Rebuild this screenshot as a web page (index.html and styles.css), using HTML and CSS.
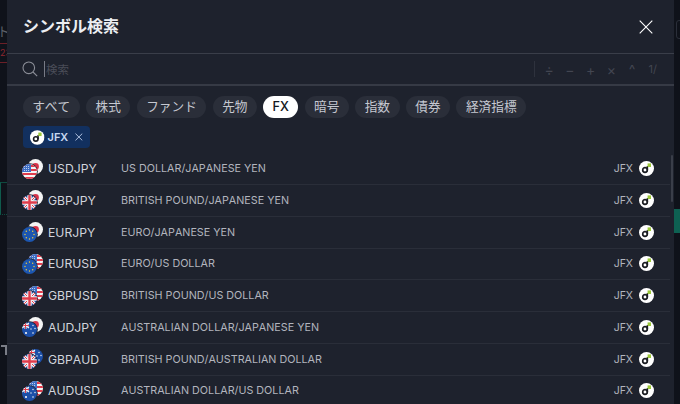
FILE: index.html
```html
<!DOCTYPE html>
<html lang="ja">
<head>
<meta charset="utf-8">
<title>シンボル検索</title>
<link rel="stylesheet" href="styles.css">
</head>
<body>
<svg class="defs" width="0" height="0" aria-hidden="true">
  <defs>
    <symbol id="jpy" viewBox="0 0 15 15"><circle cx="7.5" cy="7.5" r="7.5" fill="#f4f4f4"/><circle cx="7.5" cy="7.5" r="3.4" fill="#d8334a"/></symbol>
    <symbol id="usd" viewBox="0 0 15 15">
      <clipPath id="cu"><circle cx="7.5" cy="7.5" r="7.5"/></clipPath>
      <g clip-path="url(#cu)"><rect width="15" height="15" fill="#f5f5f5"/>
      <rect y="1" width="15" height="2" fill="#e03c4c"/><rect y="5" width="15" height="2" fill="#e03c4c"/><rect y="9" width="15" height="2" fill="#e03c4c"/><rect y="13" width="15" height="2" fill="#e03c4c"/>
      <rect width="9" height="8" fill="#3f6fc4"/>
      <path d="M2 2.5h5M2 4.5h5M2 6.5h5" stroke="#dfe8f7" stroke-width=".8" stroke-dasharray="1 1"/></g>
    </symbol>
    <symbol id="gbp" viewBox="0 0 15 15">
      <clipPath id="cg"><circle cx="7.5" cy="7.5" r="7.5"/></clipPath>
      <g clip-path="url(#cg)"><rect width="15" height="15" fill="#2a4a9a"/>
      <path d="M0 0L15 15M15 0L0 15" stroke="#f5f5f5" stroke-width="3"/>
      <path d="M0 0L15 15M15 0L0 15" stroke="#e03c4c" stroke-width="1"/>
      <path d="M7.5 0V15M0 7.5H15" stroke="#f5f5f5" stroke-width="4.4"/>
      <path d="M7.5 0V15M0 7.5H15" stroke="#e03c4c" stroke-width="2.4"/></g>
    </symbol>
    <symbol id="eur" viewBox="0 0 15 15"><circle cx="7.5" cy="7.5" r="7.5" fill="#1c56b0"/>
      <g fill="#f3cf3c"><circle cx="7.5" cy="3" r=".7"/><circle cx="10.7" cy="4.3" r=".7"/><circle cx="12" cy="7.5" r=".7"/><circle cx="10.7" cy="10.7" r=".7"/><circle cx="7.5" cy="12" r=".7"/><circle cx="4.3" cy="10.7" r=".7"/><circle cx="3" cy="7.5" r=".7"/><circle cx="4.3" cy="4.3" r=".7"/></g>
    </symbol>
    <symbol id="aud" viewBox="0 0 15 15">
      <clipPath id="ca"><circle cx="7.5" cy="7.5" r="7.5"/></clipPath>
      <g clip-path="url(#ca)"><rect width="15" height="15" fill="#1c4fa8"/>
      <path d="M0 1L7 6M7 1L0 6" stroke="#f5f5f5" stroke-width="1.3"/>
      <path d="M3.5 0V7M0 3.5H7" stroke="#f5f5f5" stroke-width="2"/>
      <path d="M3.5 0V7M0 3.5H7" stroke="#e03c4c" stroke-width="1"/>
      <g fill="#f5f5f5"><circle cx="4" cy="11" r="1.1"/><circle cx="11" cy="3.5" r=".7"/><circle cx="13" cy="6.5" r=".7"/><circle cx="9" cy="7" r=".7"/><circle cx="11" cy="11" r=".8"/></g></g>
    </symbol>
    <symbol id="jfx" viewBox="0 0 15 15"><circle cx="7.5" cy="7.5" r="7.5" fill="#fff"/>
      <circle cx="6" cy="9" r="2.3" fill="none" stroke="#1b1d22" stroke-width="1.7"/>
      <path d="M8.4 9V5" stroke="#1b1d22" stroke-width="1.5"/>
      <rect x="8.6" y="2.4" width="3.4" height="3.6" fill="#9cc83a"/>
    </symbol>
  </defs>
</svg>

<div class="backdrop backdrop-left">
  <span class="bg-letter bg-to">ト</span>
  <span class="bg-red">23</span>
  <span class="bg-green"></span>
  <span class="bg-t"></span>
</div>

<main class="modal">
  <header class="modal-head">
    <h1 class="title">シンボル検索</h1>
    <svg class="close" width="14" height="14" viewBox="0 0 14 14"><path d="M.7.7l12.6 12.6M13.3.7L.7 13.3" stroke="#fff" stroke-width="1.1" fill="none"/></svg>
  </header>

  <div class="search">
    <svg class="search-icon" width="16" height="16" viewBox="0 0 16 16"><circle cx="6.8" cy="6.8" r="5.8" fill="none" stroke="#8b8e97" stroke-width="1.1"/><path d="M11 11l4.2 4.2" stroke="#8b8e97" stroke-width="1.1"/></svg>
    <span class="cursor"></span>
    <span class="placeholder">検索</span>
    <div class="hints">
      <span class="hint-div"></span>
      <span class="hint">÷</span><span class="hint">−</span><span class="hint">+</span><span class="hint">×</span><span class="hint">^</span><span class="hint hint-sm">1/</span>
    </div>
  </div>

  <nav class="chips">
    <span class="chip">すべて</span>
    <span class="chip">株式</span>
    <span class="chip">ファンド</span>
    <span class="chip">先物</span>
    <span class="chip chip-on">FX</span>
    <span class="chip">暗号</span>
    <span class="chip">指数</span>
    <span class="chip">債券</span>
    <span class="chip">経済指標</span>
  </nav>

  <div class="tags">
    <span class="tag">
      <svg width="15" height="15"><use href="#jfx"/></svg>
      <span>JFX</span>
      <svg class="tag-x" width="8" height="8" viewBox="0 0 8 8"><path d="M.5.5l7 7M7.5.5l-7 7" stroke="#b5c6e4" stroke-width="1"/></svg>
    </span>
  </div>

  <div class="list">
    <div class="row">
      <svg class="pair" width="21" height="20"><use href="#jpy" x="6" y="0" width="15" height="15"/><circle cx="7.5" cy="12.5" r="8.3" fill="#1e222d"/><use href="#usd" x="0" y="5" width="15" height="15"/></svg>
      <span class="sym">USDJPY</span><span class="desc">US DOLLAR/JAPANESE YEN</span><span class="ex">JFX</span><svg class="ex-icon" width="15" height="15"><use href="#jfx"/></svg>
    </div>
    <div class="row">
      <svg class="pair" width="21" height="20"><use href="#jpy" x="6" y="0" width="15" height="15"/><circle cx="7.5" cy="12.5" r="8.3" fill="#1e222d"/><use href="#gbp" x="0" y="5" width="15" height="15"/></svg>
      <span class="sym">GBPJPY</span><span class="desc">BRITISH POUND/JAPANESE YEN</span><span class="ex">JFX</span><svg class="ex-icon" width="15" height="15"><use href="#jfx"/></svg>
    </div>
    <div class="row">
      <svg class="pair" width="21" height="20"><use href="#jpy" x="6" y="0" width="15" height="15"/><circle cx="7.5" cy="12.5" r="8.3" fill="#1e222d"/><use href="#eur" x="0" y="5" width="15" height="15"/></svg>
      <span class="sym">EURJPY</span><span class="desc">EURO/JAPANESE YEN</span><span class="ex">JFX</span><svg class="ex-icon" width="15" height="15"><use href="#jfx"/></svg>
    </div>
    <div class="row">
      <svg class="pair" width="21" height="20"><use href="#usd" x="6" y="0" width="15" height="15"/><circle cx="7.5" cy="12.5" r="8.3" fill="#1e222d"/><use href="#eur" x="0" y="5" width="15" height="15"/></svg>
      <span class="sym">EURUSD</span><span class="desc">EURO/US DOLLAR</span><span class="ex">JFX</span><svg class="ex-icon" width="15" height="15"><use href="#jfx"/></svg>
    </div>
    <div class="row">
      <svg class="pair" width="21" height="20"><use href="#usd" x="6" y="0" width="15" height="15"/><circle cx="7.5" cy="12.5" r="8.3" fill="#1e222d"/><use href="#gbp" x="0" y="5" width="15" height="15"/></svg>
      <span class="sym">GBPUSD</span><span class="desc">BRITISH POUND/US DOLLAR</span><span class="ex">JFX</span><svg class="ex-icon" width="15" height="15"><use href="#jfx"/></svg>
    </div>
    <div class="row">
      <svg class="pair" width="21" height="20"><use href="#jpy" x="6" y="0" width="15" height="15"/><circle cx="7.5" cy="12.5" r="8.3" fill="#1e222d"/><use href="#aud" x="0" y="5" width="15" height="15"/></svg>
      <span class="sym">AUDJPY</span><span class="desc">AUSTRALIAN DOLLAR/JAPANESE YEN</span><span class="ex">JFX</span><svg class="ex-icon" width="15" height="15"><use href="#jfx"/></svg>
    </div>
    <div class="row">
      <svg class="pair" width="21" height="20"><use href="#aud" x="6" y="0" width="15" height="15"/><circle cx="7.5" cy="12.5" r="8.3" fill="#1e222d"/><use href="#gbp" x="0" y="5" width="15" height="15"/></svg>
      <span class="sym">GBPAUD</span><span class="desc">BRITISH POUND/AUSTRALIAN DOLLAR</span><span class="ex">JFX</span><svg class="ex-icon" width="15" height="15"><use href="#jfx"/></svg>
    </div>
    <div class="row">
      <svg class="pair" width="21" height="20"><use href="#usd" x="6" y="0" width="15" height="15"/><circle cx="7.5" cy="12.5" r="8.3" fill="#1e222d"/><use href="#aud" x="0" y="5" width="15" height="15"/></svg>
      <span class="sym">AUDUSD</span><span class="desc">AUSTRALIAN DOLLAR/US DOLLAR</span><span class="ex">JFX</span><svg class="ex-icon" width="15" height="15"><use href="#jfx"/></svg>
    </div>
    <span class="thumb"></span>
  </div>
</main>

<div class="backdrop backdrop-right">
  <span class="bg-box"></span>
  <span class="bg-green-r"></span>
</div>
</body>
</html>
```
FILE: styles.css
```css
* { box-sizing: border-box; }
html, body { margin: 0; height: 100%; }
body {
  display: flex;
  width: 680px;
  height: 404px;
  overflow: hidden;
  background: #0f121a;
  font-family: Inter, "Noto Sans CJK JP", sans-serif;
  font-kerning: none;
  color: #d1d4dc;
}
.defs { position: absolute; }
.backdrop { position: relative; flex: none; overflow: hidden; background: #0f121a; }
.backdrop-left { width: 7px; }
.backdrop-right { width: 6px; }
.bg-letter { position: absolute; font-size: 13px; color: #5d6069; line-height: 16px; }
.bg-to { top: 23px; left: -3px; }
.bg-t { position: absolute; top: 345px; left: 1px; width: 6px; height: 10px; border-top: 2px solid #7a7d86; border-right: 2px solid #7a7d86; }
.bg-red {
  position: absolute; top: 43px; left: 0; width: 7px; height: 20px; overflow: hidden;
  border-top: 1px solid #6b1f27; border-bottom: 1px solid #6b1f27;
  font-size: 9px; line-height: 18px; color: #8e2630;
}
.bg-green { position: absolute; top: 182px; left: 0; width: 7px; height: 33px; border-top: 1px solid #0f4a40; border-bottom: 1px dotted #0f4a40; border-left: 1px solid #0f5a4c; }
.bg-green-r { position: absolute; top: 209px; left: 0; width: 6px; height: 24px; background: #0e6152; }
.bg-box { position: absolute; top: 20px; left: 2px; width: 8px; height: 19px; border: 1px solid #2a2e39; border-radius: 3px; }

.modal { flex: none; width: 667px; height: 404px; background: #1e222d; overflow: hidden; display: flex; flex-direction: column; }
.modal-head { flex: none; height: 54px; padding: 0 21px 0 16px; display: flex; align-items: center; justify-content: space-between; border-bottom: 1px solid #3a3e49; }
.title { margin: 0; font-size: 16px; font-weight: 600; color: #eceef2; line-height: 20px; position: relative; top: -1px; }
.close { flex: none; }

.search { flex: none; height: 32px; padding: 0 11px 0 15px; display: flex; align-items: center; border-bottom: 2px solid #363a45; }
.search-icon { flex: none; }
.cursor { flex: none; width: 1px; height: 16px; margin-left: 6px; background: #787b86; }
.placeholder { margin-left: 1px; font-size: 11.5px; color: #4a4d58; }
.hints { margin-left: auto; display: flex; align-items: center; color: #434651; font-size: 14px; }
.hint-div { width: 1px; height: 16px; background: #2e323d; margin-right: 4px; }
.hint { width: 20.7px; text-align: center; }
.hint-sm { font-size: 11px; }

.chips { flex: none; display: flex; gap: 6.25px; padding: 10px 16px 0 15.7px; }
.chip { flex: none; height: 22px; padding: 0 9.5px; border-radius: 11px; background: #2a2e39; font-size: 12.7px; line-height: 22px; color: #c6c9d1; }
.chip-on { width: 35px; padding: 0; text-align: center; background: #fff; color: #131722; font-weight: 500; }

.tags { flex: none; display: flex; padding: 8px 16px 0; }
.tag { height: 22px; width: 67px; padding: 0 7px; display: flex; align-items: center; gap: 3px; border-radius: 4px; background: #12305f; color: #c8d8f2; font-size: 11px; font-weight: 600; }
.tag-x { margin-left: 4px; }

.list { flex: 1; min-height: 0; padding-top: 5.3px; position: relative; }
.row { height: 31.75px; margin-right: 4px; padding: 0 16px 0 15px; display: flex; align-items: center; border-bottom: 1px solid #2a2e39; }
.pair { flex: none; }
.sym { width: 73px; margin-left: 5px; flex: none; font-size: 12.2px; color: #d1d4dc; }
.desc { flex: 1; font-size: 10.75px; color: #b2b5be; }
.ex { font-size: 10.5px; color: #b2b5be; }
.ex-icon { flex: none; margin-left: 6px; }
.thumb { position: absolute; right: 1px; top: 7px; width: 2px; height: 47px; border-radius: 1px; background: #3a3e49; }
```
